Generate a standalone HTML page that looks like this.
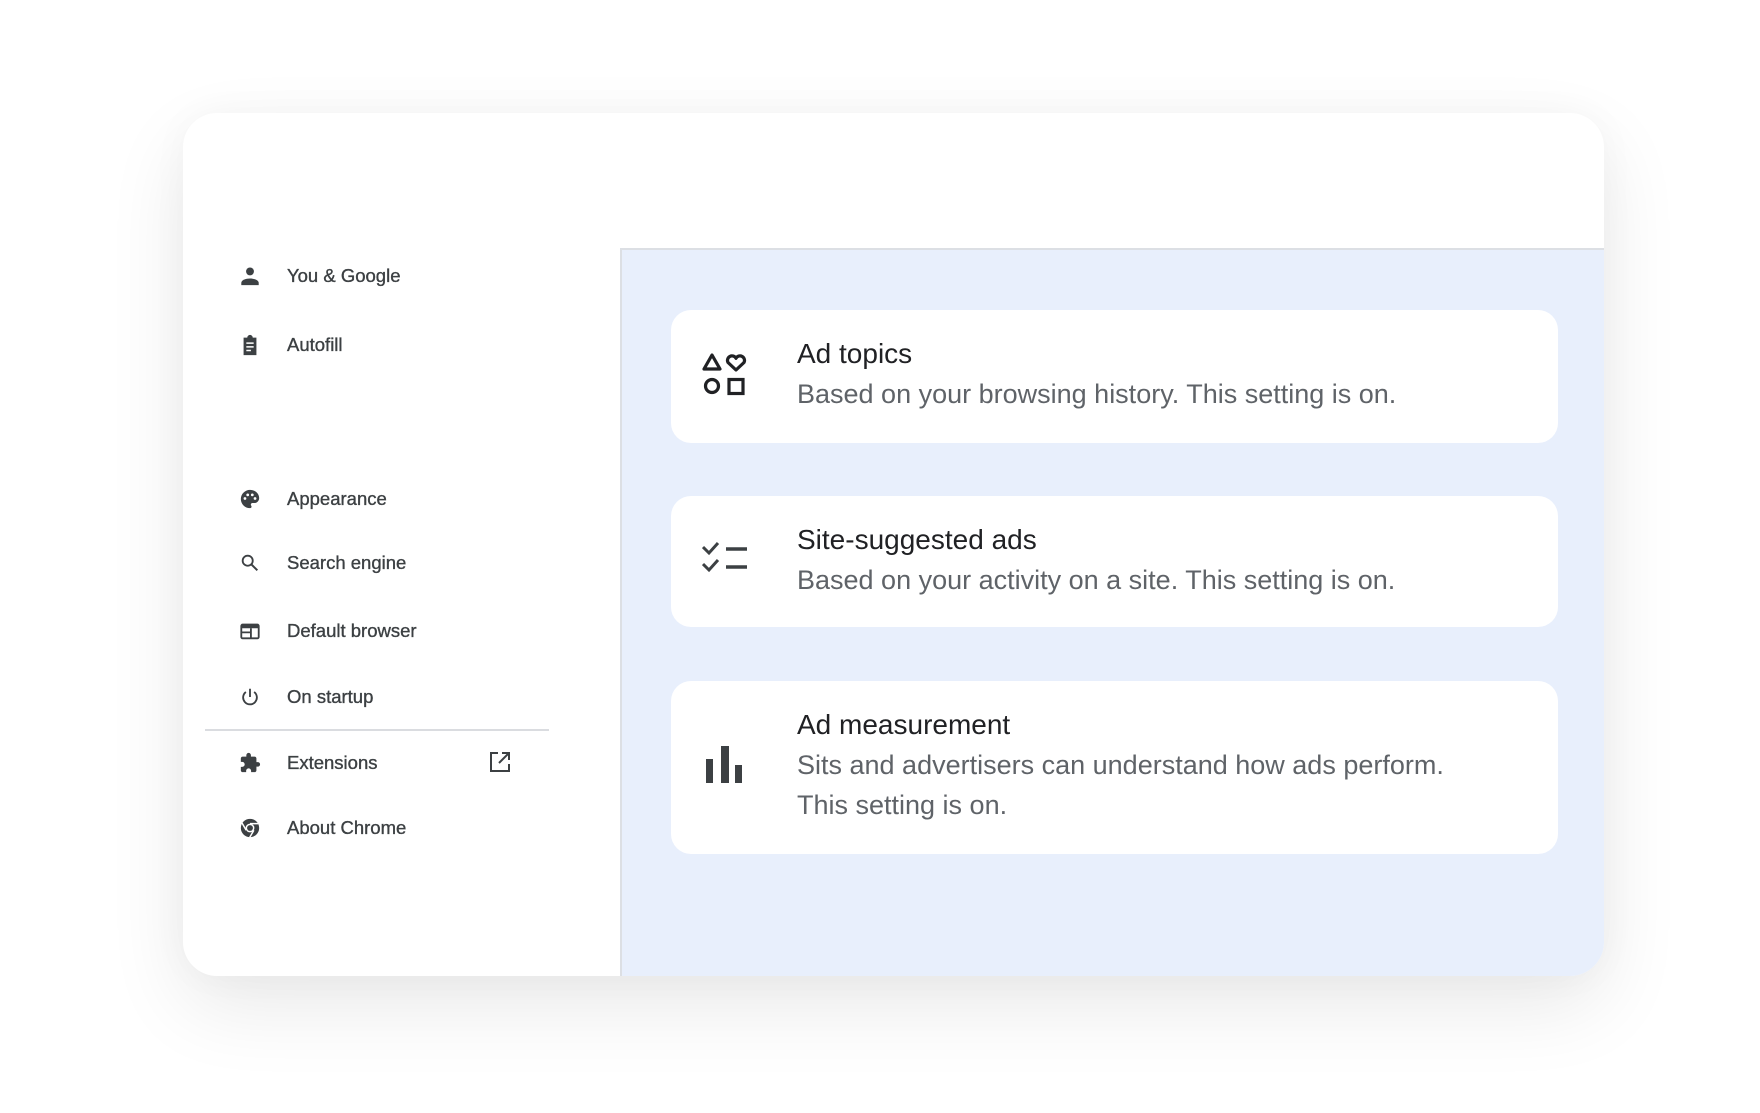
<!DOCTYPE html>
<html><head><meta charset="utf-8"><style>
*{margin:0;padding:0;box-sizing:border-box}
html,body{width:1760px;height:1113px;background:#fff;overflow:hidden;font-family:"Liberation Sans",sans-serif}
.card{position:absolute;left:183px;top:113px;width:1421px;height:863px;background:#fff;border-radius:34px;box-shadow:0 30px 80px rgba(0,0,0,0.09),0 0 40px rgba(0,0,0,0.03);overflow:hidden}
.panel{position:absolute;left:437px;top:135px;right:0;bottom:0;background:#e8effc;border-top:2px solid #dcdfe4;border-left:2px solid #dcdfe4}
.item{position:absolute;left:0;height:30px;display:flex;align-items:center;font-size:18.5px;color:#3c4043;-webkit-text-stroke:0.35px #3c4043}
.item svg{position:absolute;left:56px;top:4px;width:22px;height:22px}
.item span{position:absolute;left:104px;white-space:nowrap}
.div{position:absolute;left:22px;width:344px;top:616px;height:2px;background:#dadce0}
.sc{position:absolute;left:49px;width:887px;background:#fff;border-radius:20px}
.sc svg{position:absolute}
.t{position:absolute;left:126px;font-size:28px;color:#202124;white-space:nowrap}
.s{position:absolute;left:126px;font-size:27px;color:#5f6368;line-height:40px;white-space:nowrap}
</style></head><body>
<div class="card">
<div class="item" style="top:148px"><svg viewBox="0 0 24 24"><circle cx="12" cy="7" r="4.3" fill="#3c4043"/><path d="M2.5 22v-2.5c0-3 5-4.8 9.5-4.8s9.5 1.8 9.5 4.8V22z" fill="#3c4043"/></svg><span>You &amp; Google</span></div>
<div class="item" style="top:217px"><svg viewBox="0 0 24 24"><path d="M5 4h4a3 3 0 0 1 6 0h4v19H5z" fill="#3c4043"/><path d="M8 10h8M8 14h8M8 18h5" stroke="#fff" stroke-width="1.6"/></svg><span>Autofill</span></div>
<div class="item" style="top:371px"><svg viewBox="0 0 24 24"><path d="M12 2C6.5 2 2 6.5 2 12s4.5 10 10 10c1 0 1.7-.8 1.7-1.7 0-.4-.2-.8-.4-1.1-.3-.3-.4-.7-.4-1.1 0-.9.8-1.7 1.7-1.7h2c3 0 5.4-2.4 5.4-5.4C22 6 17.5 2 12 2z" fill="#3c4043"/><circle cx="6.5" cy="11.5" r="1.5" fill="#fff"/><circle cx="9.5" cy="7.5" r="1.5" fill="#fff"/><circle cx="14.5" cy="7.5" r="1.5" fill="#fff"/><circle cx="17.5" cy="11.5" r="1.5" fill="#fff"/></svg><span>Appearance</span></div>
<div class="item" style="top:435px"><svg viewBox="0 0 24 24"><circle cx="9.5" cy="9.5" r="5.5" fill="none" stroke="#3c4043" stroke-width="2"/><path d="M13.5 13.5l6.5 6.5" stroke="#3c4043" stroke-width="2.2"/></svg><span>Search engine</span></div>
<div class="item" style="top:503px"><svg viewBox="0 0 24 24"><rect x="2.5" y="5" width="19" height="15" rx="1.5" fill="none" stroke="#3c4043" stroke-width="2"/><rect x="2.5" y="5" width="19" height="4" fill="#3c4043"/><path d="M3 13.5h10M13 9v11" stroke="#3c4043" stroke-width="2"/></svg><span>Default browser</span></div>
<div class="item" style="top:569px"><svg viewBox="0 0 24 24"><path d="M12 3v9" stroke="#3c4043" stroke-width="2"/><path d="M7.5 6.5a7.5 7.5 0 1 0 9 0" fill="none" stroke="#3c4043" stroke-width="2"/></svg><span>On startup</span></div>
<div class="div"></div>
<div class="item" style="top:635px"><svg viewBox="0 0 24 24"><path d="M20.5 11H19V7c0-1.1-.9-2-2-2h-4V3.5a2.5 2.5 0 0 0-5 0V5H4c-1.1 0-2 .9-2 2v3.8h1.5c1.5 0 2.7 1.2 2.7 2.7S5 16.2 3.5 16.2H2V20c0 1.1.9 2 2 2h3.8v-1.5c0-1.5 1.2-2.7 2.7-2.7s2.7 1.2 2.7 2.7V22H17c1.1 0 2-.9 2-2v-4h1.5a2.5 2.5 0 0 0 0-5z" fill="#3c4043"/></svg><span>Extensions</span><svg viewBox="0 0 24 24" style="left:305px;top:2px;width:24px;height:24px"><path d="M10 3H3v18h18v-7" fill="none" stroke="#3c4043" stroke-width="2"/><path d="M14 3h7v7M21 3L11 13" fill="none" stroke="#3c4043" stroke-width="2"/></svg></div>
<div class="item" style="top:700px"><svg viewBox="0 0 24 24"><circle cx="12" cy="12" r="10" fill="#3c4043"/><circle cx="12" cy="12" r="4.8" fill="#fff"/><circle cx="12" cy="12" r="3.2" fill="#3c4043"/><path d="M12 7.2h9M7.8 14.4L3.3 6.6M16.2 14.4l-4.5 7.8" stroke="#fff" stroke-width="1.6"/></svg><span>About Chrome</span></div>

<div class="panel">
<div class="sc" style="top:60px;height:133px">
<svg viewBox="0 0 46 44" style="left:31px;top:43px;width:46px;height:44px"><path d="M10 2L18 16H2z" fill="none" stroke="#202124" stroke-width="3.2" stroke-linejoin="round"/><path d="M34 17l-8-7.5a4.5 4.5 0 1 1 8-4.2a4.5 4.5 0 1 1 8 4.2z" fill="none" stroke="#202124" stroke-width="3.2" stroke-linejoin="round"/><circle cx="10" cy="33" r="6.5" fill="none" stroke="#202124" stroke-width="3.2"/><rect x="27" y="26.5" width="14" height="14" fill="none" stroke="#202124" stroke-width="3.2"/></svg>
<div class="t" style="top:28px">Ad topics</div>
<div class="s" style="top:64px">Based on your browsing history. This setting is on.</div>
</div>
<div class="sc" style="top:246px;height:131px">
<svg viewBox="0 0 46 34" style="left:31px;top:45px;width:46px;height:34px"><path d="M1 6l6 6 9-10M1 23l6 6 9-10" fill="none" stroke="#3c4043" stroke-width="3"/><path d="M24 8h21M24 26h21" stroke="#3c4043" stroke-width="3.4"/></svg>
<div class="t" style="top:28px">Site-suggested ads</div>
<div class="s" style="top:64px">Based on your activity on a site. This setting is on.</div>
</div>
<div class="sc" style="top:431px;height:173px">
<svg viewBox="0 0 36 37" style="left:35px;top:65px;width:36px;height:37px"><rect x="0" y="13" width="7" height="24" fill="#3c4043"/><rect x="15" y="0" width="8" height="37" fill="#3c4043"/><rect x="29" y="19" width="7" height="18" fill="#3c4043"/></svg>
<div class="t" style="top:28px">Ad measurement</div>
<div class="s" style="top:64px">Sits and advertisers can understand how ads perform.<br>This setting is on.</div>
</div>
</div>
</div>
</body></html>
